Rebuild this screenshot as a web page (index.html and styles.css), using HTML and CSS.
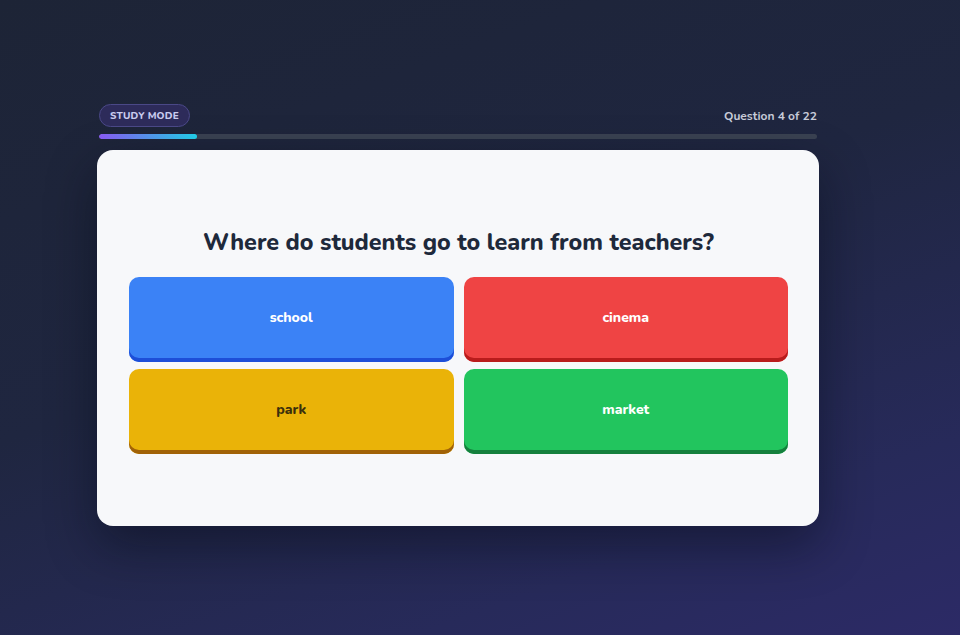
FILE: index.html
```html
<!DOCTYPE html>
<html lang="en">
<head>
<meta charset="utf-8">
<title>Study Mode</title>
<link rel="stylesheet" href="styles.css">
</head>
<body>
<main class="wrap">
  <header class="top">
    <span class="pill">Study Mode</span>
    <span class="count">Question 4 of 22</span>
  </header>
  <div class="progress"><div class="fill" style="width:13.6%"></div></div>
  <section class="card">
    <h1 class="question">Where do students go to learn from teachers?</h1>
    <div class="answers">
      <button class="ans blue">school</button>
      <button class="ans red">cinema</button>
      <button class="ans yellow">park</button>
      <button class="ans green">market</button>
    </div>
  </section>
</main>
</body>
</html>
```
FILE: styles.css
```css
html, body { height: 100%; }
body {
  margin: 0;
  font-family: "Nunito", Lato, "Noto Sans", sans-serif;
  background: linear-gradient(160deg, #1d2436 0%, #1f2640 45%, #272a5a 80%, #2c2a66 100%);
  overflow: hidden;
}
.wrap {
  width: 720px;
  margin: 0 0 0 98px;
  padding-top: 104px;
}
.top {
  display: flex;
  justify-content: space-between;
  align-items: center;
  height: 23px;
  margin-left: 1px;
}
.pill {
  display: inline-flex;
  align-items: center;
  height: 21px;
  padding: 0 10px;
  border-radius: 12px;
  background: #2d2b5a;
  border: 1px solid #4a4887;
  color: #c9ccef;
  font-size: 10px;
  font-weight: 800;
  letter-spacing: 0.2px;
  text-transform: uppercase;
}
.count {
  color: #c7cbd8;
  font-size: 12px;
  font-weight: 700;
  margin-right: 1px;
}
.progress {
  margin: 7px 1px 0 1px;
  height: 5px;
  background: #3a4252;
  border-radius: 3px;
  overflow: hidden;
}
.fill {
  height: 100%;
  border-radius: 3px;
  background: linear-gradient(90deg, #8b5cf6, #22d3ee);
}
.card {
  margin-top: 11px;
  margin-left: -1px;
  width: 722px;
  height: 376px;
  box-sizing: border-box;
  background: #f7f8fa;
  border-radius: 16px;
  padding: 6px 31px 0 32px;
  display: flex;
  flex-direction: column;
  justify-content: center;
  box-shadow: 0 20px 50px rgba(5, 8, 20, 0.45);
}
.question {
  margin: 0 0 21px;
  text-align: center;
  font-size: 23.3px;
  line-height: 28px;
  font-weight: 800;
  color: #1e293b;
}
.answers {
  display: grid;
  grid-template-columns: 1fr 1fr;
  gap: 7px 10px;
}
.ans {
  height: 85px;
  border: none;
  border-radius: 10px;
  font-family: inherit;
  font-size: 14px;
  font-weight: 800;
  color: #ffffff;
  cursor: pointer;
  padding: 0 0 4px;
}
.blue { background: #3b82f6; box-shadow: inset 0 -4px 0 #1d4ed8; }
.red { background: #ef4444; box-shadow: inset 0 -4px 0 #b91c1c; }
.yellow { background: #eab308; box-shadow: inset 0 -4px 0 #a16207; color: #3b2f0c; }
.green { background: #22c55e; box-shadow: inset 0 -4px 0 #15803d; }
```
